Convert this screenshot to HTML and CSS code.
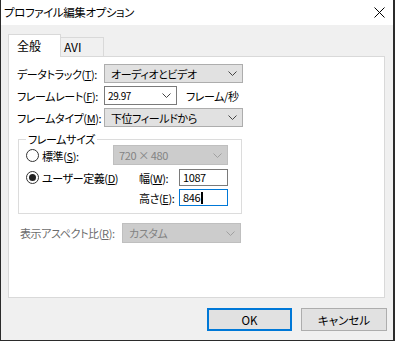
FILE: index.html
```html
<!DOCTYPE html>
<html lang="ja">
<head>
    <meta charset="UTF-8">
    <title>プロファイル編集オプション</title>
    <link rel="stylesheet" href="styles.css">
</head>
<body>
    <div class="dialog">
        <div class="titlebar">
            <span class="title">プロファイル編集オプション</span>
            <svg class="close" width="11" height="11" viewBox="0 0 11 11">
                <path d="M0.5 0.5 L10.5 10.5 M10.5 0.5 L0.5 10.5" stroke="#000" stroke-width="1" fill="none"/>
            </svg>
        </div>

        <div class="tabs">
            <div class="tab active">全般</div>
            <div class="tab">AVI</div>
        </div>

        <div class="panel">
            <div class="row">
                <span class="lbl">データトラック(<u>T</u>):</span>
                <div class="combo wide">
                    <span>オーディオとビデオ</span>
                    <svg class="chev" width="9" height="5" viewBox="0 0 9 5"><path d="M0.5 0.5 L4.5 4.5 L8.5 0.5" stroke="#444" fill="none"/></svg>
                </div>
            </div>
            <div class="row">
                <span class="lbl">フレームレート(<u>F</u>):</span>
                <div class="combo small">
                    <span>29.97</span>
                    <svg class="chev" width="9" height="5" viewBox="0 0 9 5"><path d="M0.5 0.5 L4.5 4.5 L8.5 0.5" stroke="#444" fill="none"/></svg>
                </div>
                <span class="unit">フレーム/秒</span>
            </div>
            <div class="row">
                <span class="lbl">フレームタイプ(<u>M</u>):</span>
                <div class="combo wide">
                    <span>下位フィールドから</span>
                    <svg class="chev" width="9" height="5" viewBox="0 0 9 5"><path d="M0.5 0.5 L4.5 4.5 L8.5 0.5" stroke="#444" fill="none"/></svg>
                </div>
            </div>

            <fieldset class="group">
                <legend>フレームサイズ</legend>
                <div class="grid">
                    <div class="radio"><span class="dot"></span>標準(<u>S</u>):</div>
                    <div class="combo disabled span2">
                        <span>720 × 480</span>
                        <svg class="chev" width="9" height="5" viewBox="0 0 9 5"><path d="M0.5 0.5 L4.5 4.5 L8.5 0.5" stroke="#a0a0a0" fill="none"/></svg>
                    </div>

                    <div class="radio"><span class="dot checked"></span>ユーザー定義(<u>D</u>)</div>
                    <span class="sublbl">幅(<u>W</u>):</span>
                    <div class="field">1087</div>

                    <div></div>
                    <span class="sublbl">高さ(<u>E</u>):</span>
                    <div class="field focus">846<span class="caret"></span></div>
                </div>
            </fieldset>

            <div class="row aspect">
                <span class="lbl gray">表示アスペクト比(<u>R</u>):</span>
                <div class="combo disabled aspect-combo">
                    <span>カスタム</span>
                    <svg class="chev" width="9" height="5" viewBox="0 0 9 5"><path d="M0.5 0.5 L4.5 4.5 L8.5 0.5" stroke="#a0a0a0" fill="none"/></svg>
                </div>
            </div>
        </div>

        <div class="buttons">
            <button class="btn default">OK</button>
            <button class="btn cancel">キャンセル</button>
        </div>
    </div>
</body>
</html>
```

FILE: styles.css
```css
html {
    background: #2b2b2b;
}

body {
    margin: 0;
    font-family: "Noto Sans CJK JP", "Noto Sans", sans-serif;
    font-size: 11px;
    letter-spacing: -0.4px;
    font-feature-settings: "palt";
    color: #000;
}

.dialog {
    width: 392px;
    height: 340px;
    background: #f0f0f0;
    border: 1px solid #2b2b2b;
    border-top: none;
}

.titlebar {
    height: 25px;
    background: #fff;
    display: flex;
    align-items: center;
    justify-content: space-between;
    padding: 0 8px 0 3px;
}

.title {
    font-size: 11.5px;
    line-height: 25px;
}

.close {
    display: block;
}

.tabs {
    height: 31px;
    box-sizing: border-box;
    display: flex;
    align-items: flex-end;
    padding-left: 7px;
}

.tab {
    box-sizing: border-box;
    height: 19px;
    width: 43px;
    border: 1px solid #d9d9d9;
    border-bottom: none;
    border-left: none;
    padding-left: 3px;
    line-height: 18px;
    font-size: 12px;
    letter-spacing: 0;
}

.tab.active {
    position: relative;
    z-index: 1;
    height: 23px;
    width: 53px;
    margin-bottom: -1px;
    background: #fff;
    border-left: 1px solid #d9d9d9;
    padding-left: 8px;
    line-height: 21px;
}

.panel {
    box-sizing: border-box;
    width: 377px;
    height: 242px;
    margin-left: 7px;
    background: #fff;
    border: 1px solid #d9d9d9;
    padding: 7px 8px 0;
}

.row {
    display: flex;
    align-items: center;
    height: 19px;
    margin-bottom: 3px;
}

.lbl {
    flex: none;
    width: 87px;
    white-space: nowrap;
}

u {
    text-decoration-thickness: 1px;
    text-underline-offset: 1px;
}

.combo {
    flex: none;
    box-sizing: border-box;
    height: 19px;
    display: flex;
    align-items: center;
    justify-content: space-between;
    background: #e1e1e1;
    border: 1px solid #adadad;
    padding: 0 5px 0 6px;
    white-space: nowrap;
}

.combo.wide {
    width: 139px;
}

.combo.small {
    width: 73px;
    background: #fff;
    border-color: #7a7a7a;
    padding-left: 3px;
    font-size: 10px;
}

.unit {
    margin-left: 9px;
}

.chev {
    display: block;
}

.combo.disabled {
    background: #cccccc;
    border-color: #bfbfbf;
    color: #838383;
}

.group {
    box-sizing: border-box;
    width: 224px;
    margin: 6px 0 0 1px;
    padding: 0 0 7px 7px;
    border: 1px solid #dcdcdc;
}

.group legend {
    line-height: 12px;
    padding: 0 2px;
    margin-left: 0;
}

.grid {
    display: grid;
    grid-template-columns: 87px 66px 49px;
    grid-template-rows: 21px 17px 17px;
    row-gap: 3px;
}

.radio {
    display: flex;
    align-items: center;
    white-space: nowrap;
}

.dot {
    flex: none;
    box-sizing: border-box;
    width: 13px;
    height: 13px;
    border: 1px solid #333;
    border-radius: 50%;
    margin-right: 3px;
    display: flex;
    align-items: center;
    justify-content: center;
}

.dot.checked::after {
    content: "";
    width: 7px;
    height: 7px;
    border-radius: 50%;
    background: #222;
}

.span2 {
    grid-column: 2 / 4;
    height: 20px;
    padding-left: 5px;
}

.sublbl {
    padding-left: 26px;
    display: flex;
    align-items: center;
    white-space: nowrap;
}

.field {
    box-sizing: border-box;
    height: 17px;
    border: 1px solid #7a7a7a;
    padding-left: 3px;
    line-height: 15px;
    display: flex;
    align-items: center;
}

.field.focus {
    border-color: #0078d7;
}

.caret {
    display: inline-block;
    width: 2px;
    height: 12px;
    background: #000;
    margin-left: 1px;
}

.row.aspect {
    margin-top: 9px;
    height: 20px;
}

.row.aspect .lbl {
    width: 105px;
    padding-left: 3px;
    box-sizing: border-box;
}

.gray {
    color: #6d6d6d;
}

.aspect-combo {
    width: 119px;
    height: 20px;
}

.buttons {
    display: flex;
    justify-content: flex-end;
    gap: 9px;
    margin-top: 10px;
    padding-right: 6px;
}

.btn {
    box-sizing: border-box;
    height: 23px;
    width: 85px;
    background: #e1e1e1;
    border: 1px solid #adadad;
    font-family: inherit;
    font-size: 11.5px;
    letter-spacing: 0;
    font-feature-settings: "palt";
    padding: 0;
    color: #000;
}

.btn.default {
    border: 2px solid #0078d7;
}

.btn.cancel {
    width: 86px;
}
```
